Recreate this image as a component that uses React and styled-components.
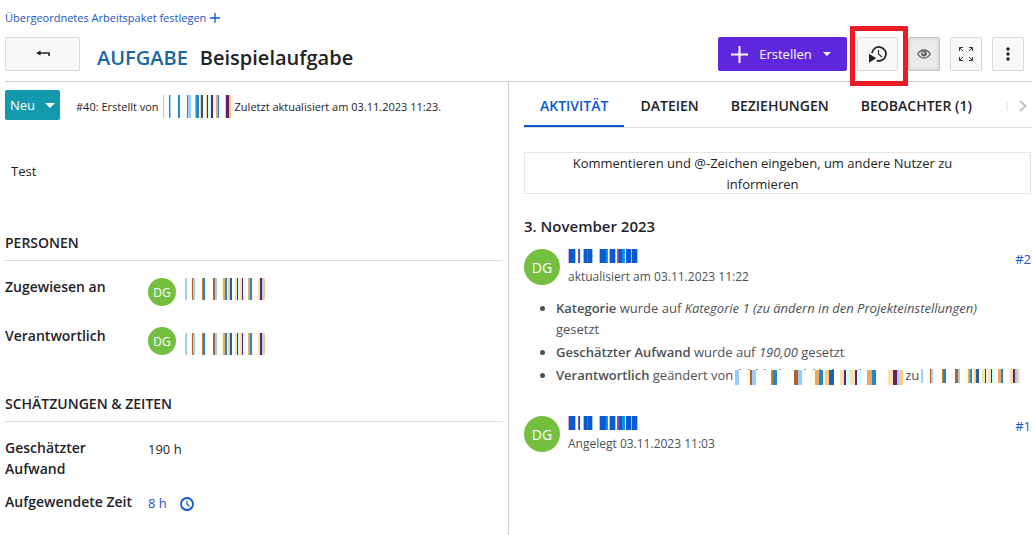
import React from "react";
import styled, { createGlobalStyle } from "styled-components";

const Global = createGlobalStyle`
  * { box-sizing: border-box; }
  body {
    margin: 0;
    background: #fff;
    color: #1f2328;
    font: 14px/21px "Open Sans", "Noto Sans", sans-serif;
  }
  button { font: inherit; color: inherit; cursor: pointer; }
  h1, h2, h3, p, ul, dl, dd { margin: 0; padding: 0; }
  svg { display: block; flex: none; }
`;

const Page = styled.div`
  display: flex;
  flex-direction: column;
  min-height: 100vh;
  padding-left: 5px;
`;

const ParentLink = styled.a`
  display: flex;
  align-items: center;
  align-self: flex-start;
  gap: 4px;
  padding-top: 8px;
  font-size: 11px;
  line-height: 20px;
  color: #1a56c4;
  text-decoration: none;
`;

const Toolbar = styled.header`
  display: flex;
  align-items: center;
  gap: 10px;
  padding: 9px 8px 10px 0;
  border-bottom: 1px solid #ccc;
`;

const ToolButton = styled.button`
  display: flex;
  align-items: center;
  justify-content: center;
  width: ${(p) => p.$width || 32}px;
  height: 34px;
  padding: 0;
  border: 1px solid ${(p) => (p.$pressed ? "#c4c4c4" : "#d9d9d9")};
  border-radius: 2px;
  background: ${(p) => (p.$pressed ? "#ececec" : "#f8f8f8")};
  box-shadow: ${(p) => (p.$pressed ? "inset 0 0 4px #ccc" : "none")};
`;

const Title = styled.h1`
  display: flex;
  flex: 1;
  gap: 12px;
  padding: 8px 0 0 7px;
  font-size: 20px;
  line-height: 26px;
  font-weight: 600;
  white-space: nowrap;
`;

const TypeName = styled.span`
  color: #1a67a3;
`;

const CreateButton = styled.button`
  display: flex;
  align-items: center;
  justify-content: space-between;
  width: 129px;
  height: 34px;
  padding: 0 16px 0 13px;
  border: 0;
  border-radius: 2px;
  background: #5f27dd;
  color: #fff;
  font-size: 13px;
`;

const Highlighted = styled.div`
  position: relative;
  &::after {
    content: "";
    position: absolute;
    inset: -11px -10px -15px -7px;
    border: 5px solid #ed1c24;
    pointer-events: none;
  }
`;

const Columns = styled.main`
  display: grid;
  flex: 1;
  grid-template-columns: minmax(0, 504fr) minmax(0, 523fr);
`;

const Details = styled.section`
  padding: 8px 5px 0 0;
  border-right: 1px solid #ccc;
`;

const Activity = styled.section`
  padding-left: 15px;
`;

const StatusRow = styled.div`
  display: flex;
  align-items: center;
  gap: 16px;
`;

const StatusButton = styled.button`
  display: flex;
  align-items: center;
  justify-content: space-between;
  width: 55px;
  height: 30px;
  padding: 0 5px;
  border: 0;
  border-radius: 2px;
  background: #1299ab;
  color: #fff;
  font-size: 13px;
`;

const Info = styled.p`
  display: flex;
  align-items: center;
  gap: 4px;
  padding-top: 2px;
  font-size: 11px;
  white-space: nowrap;
`;

const Description = styled.p`
  padding: 41px 6px 50px;
  font-size: 13px;
`;

const Group = styled.section`
  padding-bottom: ${(p) => p.$bottom || 0}px;
`;

const GroupTitle = styled.h2`
  padding-bottom: 7px;
  border-bottom: 1px solid #ddd;
  font-size: 14px;
  line-height: 21px;
  font-weight: 600;
`;

const Fields = styled.dl`
  display: grid;
  grid-template-columns: 127px 1fr;
  column-gap: 16px;
  row-gap: ${(p) => p.$gap}px;
  padding-top: 15px;
  dt { font-weight: 600; }
`;

const Value = styled.dd`
  display: flex;
  gap: 9px;
  align-items: ${(p) => (p.$low ? "flex-end" : "flex-start")};
  padding-top: 2px;
  font-size: 13px;
`;

const Time = styled(Value)`
  gap: 13px;
  align-items: center;
`;

const Link = styled.a`
  color: #1a56c4;
  font-size: 13px;
  text-decoration: none;
`;

const Avatar = styled.span`
  display: flex;
  flex: none;
  align-items: center;
  justify-content: center;
  width: ${(p) => p.$size}px;
  height: ${(p) => p.$size}px;
  border-radius: 50%;
  background: #75bf40;
  color: #fff;
  font-size: ${(p) => (p.$size > 30 ? 14 : 12)}px;
`;

const Tabs = styled.nav`
  display: flex;
  height: 46px;
  border-bottom: 1px solid #ddd;
  overflow: hidden;
`;

const Tab = styled.button`
  flex: none;
  padding: 3px 16px 0;
  border: 0;
  border-bottom: 2px solid ${(p) => (p.$active ? "#0b57d0" : "transparent")};
  background: none;
  color: ${(p) => (p.$active ? "#0b57d0" : "#1f2328")};
  font-weight: 600;
`;

const ScrollTabs = styled.button`
  display: flex;
  flex: 1;
  align-items: center;
  justify-content: flex-end;
  gap: 11px;
  min-width: 0;
  padding: 2px 5px 0 0;
  border: 0;
  background: none;
`;

const NextTab = styled.span`
  width: 2px;
  height: 10px;
  background: #f6e9ec;
`;

const CommentBox = styled.button`
  display: block;
  width: calc(100% - 1px);
  height: 42px;
  margin-top: 24px;
  padding: 0 70px 0 40px;
  border: 1px solid #e6e6e6;
  background: #fff;
  font-size: 13px;
  text-align: center;
`;

const DateTitle = styled.h3`
  padding: 21px 0 12px;
  font-size: 15px;
  line-height: 22px;
  font-weight: 600;
`;

const Entry = styled.article`
  padding-bottom: 30px;
`;

const EntryHead = styled.header`
  display: flex;
  gap: 8px;
  padding-right: 1px;
`;

const EntryMeta = styled.div`
  flex: 1;
  color: #4d5156;
  font-size: 12px;
  line-height: 28px;
`;

const Changes = styled.ul`
  display: grid;
  gap: 2px;
  padding: 7px 16px 0 32px;
  color: #4d5156;
  font-size: 13px;
  b { font-weight: 600; }
`;

const NameRow = styled.span`
  display: flex;
  gap: 2px;
  white-space: nowrap;
  svg { margin-top: 4px; }
`;

const BarSvg = styled.svg`
  display: block;
`;

const LB = "#99ccff", CR = "#fffbe0", BR = "#b0622a", GO = "#c8862b", BL = "#2288cc",
  OR = "#eaa865", PE = "#ffcc88", DB = "#2060a8", LP = "#ffe0b0", PU = "#622070",
  CY = "#ccffff", DP = "#642060", BU = "#0b5ad2", VI = "#7a58c8", PK = "#d6a8d8", SK = "#1593e6";

// Each stripe is [x, width, colour].
const PERSON = [[0, 2, LB], [5, 2, CR], [7, 1, BR], [8, 2, LB], [17, 1, GO], [18, 2, BL],
  [28, 2, BR], [30, 2, LB], [35, 3, CR], [38, 2, OR], [40, 2, BL], [42, 1, CR], [43, 2, PE],
  [45, 2, DB], [50, 2, LP], [52, 1, PU], [53, 2, CY], [55, 2, LP], [57, 1, PU], [58, 2, CY],
  [63, 2, OR], [65, 2, BL], [73, 2, LP], [75, 2, DP], [77, 1, LB], [78, 2, PE]];

const AUTHOR = [[0, 1, LB], [6, 1, BR], [7, 1, LB], [15, 2, BL], [24, 1, BR], [25, 3, LB],
  [32, 1, OR], [33, 3, BL], [36, 1, CR], [37, 1, PE], [38, 2, DB], [43, 1, PE], [44, 1, PU],
  [45, 3, CY], [48, 2, PU], [50, 1, CY], [53, 2, OR], [55, 1, BL], [62, 1, PE], [63, 3, DP],
  [66, 1, LB], [67, 1, PE]];

const USER = [[0, 1, PK], [1, 6, BU], [7, 1, LB], [10, 1, VI], [11, 1, BU], [12, 1, CY],
  [15, 1, PK], [16, 3, BU], [19, 1, VI], [20, 4, BU], [24, 1, LB], [31, 1, PK], [32, 6, BU],
  [38, 2, SK], [41, 1, PK], [42, 5, BU], [47, 1, LB], [49, 2, VI], [51, 3, BU], [54, 1, SK],
  [55, 1, VI], [56, 1, SK], [58, 5, BU], [63, 1, PK], [64, 5, BU], [69, 1, LB]];

function Bars({ data, span, width = span, height, marks = [] }) {
  return (
    <BarSvg width={width} height={height} viewBox={`0 0 ${span} ${height}`}
      preserveAspectRatio="none" shapeRendering="crispEdges" aria-hidden="true">
      {data.map(([x, w, fill]) => (
        <rect key={x} x={x} y={marks.length ? 1 : 0} width={w} height={height} fill={fill} />
      ))}
      {marks.map((x) => <rect key={`m${x}`} x={x} width="1" height="1" fill="#999" />)}
    </BarSvg>
  );
}

const Caret = ({ w = 8 }) => (
  <svg width={w} height={w / 2} viewBox="0 0 10 5"><path d="M0 0h10L5 5z" fill="#fff" /></svg>
);

function UserEntry({ text, number, children }) {
  return (
    <Entry>
      <EntryHead>
        <Avatar $size={36}>DG</Avatar>
        <EntryMeta>
          <Bars data={USER} span={70} height={14} />
          {text}
        </EntryMeta>
        <Link href="#activity">{number}</Link>
      </EntryHead>
      {children}
    </Entry>
  );
}

export default function App() {
  return (
    <Page>
      <Global />
      <ParentLink href="#parent">
        Übergeordnetes Arbeitspaket festlegen
        <svg width="10" height="10" viewBox="0 0 10 10"><path d="M5 0v10M0 5h10" stroke="#1a56c4" strokeWidth="1.3" /></svg>
      </ParentLink>

      <Toolbar>
        <ToolButton $width={75} aria-label="Zurück">
          <svg width="14" height="8" viewBox="0 0 14 8">
            <path d="M0 3L4.500 .5v5z" fill="#1f2328" />
            <path d="M4 3h9V6" fill="none" stroke="#1f2328" strokeWidth="1.6" />
          </svg>
        </ToolButton>
        <Title><TypeName>AUFGABE</TypeName><span>Beispielaufgabe</span></Title>
        <CreateButton>
          <svg width="17" height="17" viewBox="0 0 17 17"><path d="M8.5 0v17M0 8.5h17" stroke="#fff" strokeWidth="2" /></svg>
          Erstellen
          <Caret />
        </CreateButton>
        <Highlighted>
          <ToolButton $width={41} aria-label="Zeiterfassung starten">
            <svg width="19" height="17" viewBox="0 0 19 17">
              <path d="M4 7.200A7 7 0 1 1 8.800 14.600" fill="none" stroke="#1f2328" strokeWidth="1.8" />
              <path d="M10.500 4v4l3.400 3" fill="none" stroke="#1f2328" strokeWidth="1.1" />
              <path d="M1 7.800v9l7.200-4.500z" fill="#1f2328" />
            </svg>
          </ToolButton>
        </Highlighted>
        <ToolButton $pressed aria-label="Beobachten">
          <svg width="14" height="10" viewBox="0 0 14 10">
            <path d="M.8 5C2.4 2.3 4.500 1 7 1s4.600 1.300 6.200 4C11.600 7.700 9.500 9 7 9S2.400 7.700.8 5z" fill="none" stroke="#666" strokeWidth="1.400" />
            <circle cx="7" cy="4.600" r="2.900" fill="#666" />
            <circle cx="6.400" cy="4" r="1" fill="#ececec" />
          </svg>
        </ToolButton>
        <ToolButton aria-label="Vollbild">
          <svg width="14" height="14" viewBox="0 0 14 14" fill="none" stroke="#333" strokeWidth="1">
            <path d="M.5 4V.5H4M.5.5l3.500 3.500M10 .5h3.500V4M13.500.5L10 4M.5 10v3.500H4M.5 13.500L4 10M10 13.500h3.500V10M13.500 13.500L10 10" />
          </svg>
        </ToolButton>
        <ToolButton aria-label="Mehr">
          <svg width="4" height="14" viewBox="0 0 4 14" fill="#1f2328">
            <circle cx="2" cy="2" r="1.700" /><circle cx="2" cy="7" r="1.700" /><circle cx="2" cy="12" r="1.700" />
          </svg>
        </ToolButton>
      </Toolbar>

      <Columns>
        <Details>
          <StatusRow>
            <StatusButton>Neu <Caret w={10} /></StatusButton>
            <Info>
              #40: Erstellt von
              <Bars data={AUTHOR} span={68} height={23} />
              Zuletzt aktualisiert am 03.11.2023 11:23.
            </Info>
          </StatusRow>
          <Description>Test</Description>

          <Group $bottom={38}>
            <GroupTitle>PERSONEN</GroupTitle>
            <Fields $gap={19}>
              <dt>Zugewiesen an</dt>
              <Value>
                <Avatar $size={28}>DG</Avatar>
                <Bars data={PERSON} span={80} height={22} />
              </Value>
              <dt>Verantwortlich</dt>
              <Value $low>
                <Avatar $size={28}>DG</Avatar>
                <Bars data={PERSON} span={80} height={22} />
              </Value>
            </Fields>
          </Group>

          <Group>
            <GroupTitle>SCHÄTZUNGEN &amp; ZEITEN</GroupTitle>
            <Fields $gap={12}>
              <dt>Geschätzter Aufwand</dt>
              <Value>190 h</Value>
              <dt>Aufgewendete Zeit</dt>
              <Time>
                <Link href="#time">8 h</Link>
                <svg width="14" height="14" viewBox="0 0 14 14" fill="none" stroke="#0b57d0">
                  <circle cx="7" cy="7" r="6" strokeWidth="1.800" />
                  <path d="M7 3.500V7l2.500 2.500" strokeWidth="1.100" />
                </svg>
              </Time>
            </Fields>
          </Group>
        </Details>

        <Activity>
          <Tabs>
            <Tab $active>AKTIVITÄT</Tab>
            <Tab>DATEIEN</Tab>
            <Tab>BEZIEHUNGEN</Tab>
            <Tab>BEOBACHTER (1)</Tab>
            <ScrollTabs aria-label="Weitere Reiter">
              <NextTab />
              <svg width="8" height="12" viewBox="0 0 8 12"><path d="M1 1l5.500 5L1 11" fill="none" stroke="#c4c4c4" strokeWidth="2" /></svg>
            </ScrollTabs>
          </Tabs>
          <CommentBox>Kommentieren und @-Zeichen eingeben, um andere Nutzer zu informieren</CommentBox>
          <DateTitle>3. November 2023</DateTitle>
          <UserEntry text="aktualisiert am 03.11.2023 11:22" number="#2">
            <Changes>
              <li><b>Kategorie</b> wurde auf <i>Kategorie 1 (zu ändern in den Projekteinstellungen)</i> gesetzt</li>
              <li><b>Geschätzter Aufwand</b> wurde auf <i>190,00</i> gesetzt</li>
              <li>
                <NameRow>
                  <span><b>Verantwortlich</b> geändert von</span>
                  <Bars data={PERSON} span={80} width={168} height={16} marks={[2, 6, 10, 14, 21, 33, 37, 40, 46, 59]} />
                  zu
                  <Bars data={PERSON} span={80} width={98} height={14} />
                </NameRow>
              </li>
            </Changes>
          </UserEntry>
          <UserEntry text="Angelegt 03.11.2023 11:03" number="#1" />
        </Activity>
      </Columns>
    </Page>
  );
}
